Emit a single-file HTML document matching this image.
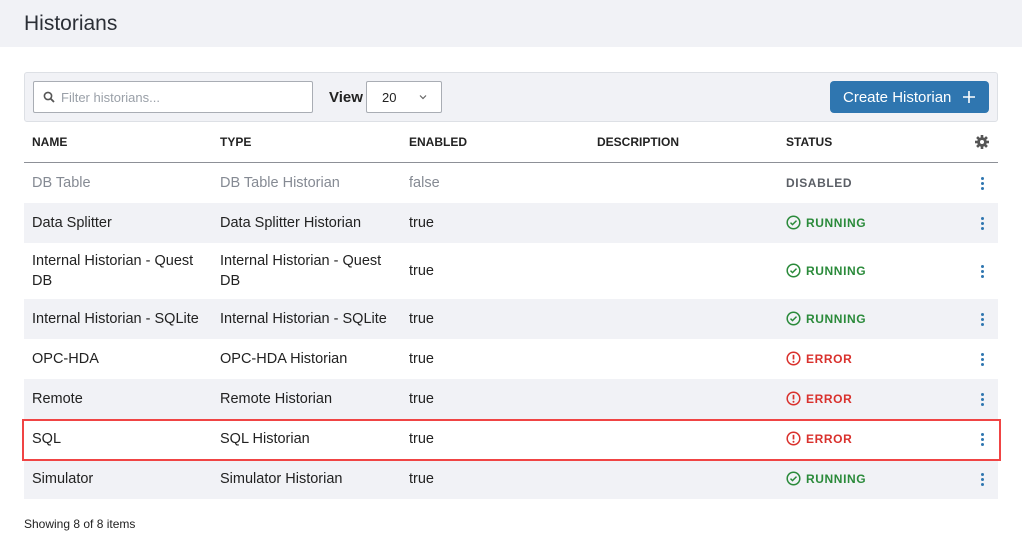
<!DOCTYPE html>
<html><head><style>
*{box-sizing:border-box;margin:0;padding:0}
body{width:1022px;height:535px;background:#fff;font-family:"Liberation Sans",sans-serif;color:#222;position:relative;overflow:hidden}
.hdr{position:absolute;left:0;top:0;width:1022px;height:47px;background:#f1f2f6}
.hdr h1{position:absolute;left:24px;top:12px;font-size:21px;font-weight:normal;color:#2b2f36}
.tb{position:absolute;left:24px;top:72px;width:974px;height:50px;background:#f1f2f6;border:1px solid #dde0e5;border-radius:3px}
.inp{position:absolute;left:8px;top:8px;width:280px;height:32px;background:#fff;border:1px solid #a9adb4;border-radius:2px;font-size:13px;color:#9aa0a8;padding:8px 0 0 27px}
.view{position:absolute;left:304px;top:16px;font-size:15px;font-weight:bold;color:#222}
.sel{position:absolute;left:341px;top:8px;width:76px;height:32px;background:#fff;border:1px solid #a9adb4;border-radius:2px;font-size:13px;padding:8px 0 0 15px}
.btn{position:absolute;left:805px;top:8px;width:159px;height:32px;background:#2f76b0;border-radius:4px;color:#fff;font-size:15px;padding:8px 0 0 13px}
.th{position:absolute;top:135px;font-size:12px;font-weight:bold;color:#222}
.line{position:absolute;left:24px;top:162px;width:974px;height:1px;background:#8d9097}
.row{position:absolute;left:24px;width:974px;font-size:14.5px;color:#222}
.row.g{background:#f1f2f6}
.row div{position:absolute}
.st{font-size:12px;font-weight:bold;letter-spacing:.6px}
.run{color:#2a8a3a}.err{color:#d9302c}
.keb{position:absolute;left:957px;width:3px}
.keb i{display:block;width:3px;height:3px;background:#2f76b0;border-radius:50%;margin-bottom:2px}
</style></head><body>
<div class="hdr"><h1>Historians</h1></div>
<div class="tb">
<div class="inp"><svg style="position:absolute;left:9px;top:9px" width="12" height="12" viewBox="0 0 12 12"><circle cx="5" cy="5" r="3.6" fill="none" stroke="#555" stroke-width="1.6"/><path d="M7.6 7.6L11 11" stroke="#555" stroke-width="1.8"/></svg>Filter historians...</div>
<div class="view">View</div>
<div class="sel">20<svg style="position:absolute;left:52px;top:12px" width="8" height="6" viewBox="0 0 8 6"><path d="M1 1.5l3 3 3-3" fill="none" stroke="#666" stroke-width="1.2"/></svg></div>
<div class="btn">Create Historian<svg style="position:absolute;left:133px;top:10px" width="12" height="12" viewBox="0 0 12 12"><path d="M6 0v12M0 6h12" stroke="#fff" stroke-width="1.6"/></svg></div>
</div>
<div class="th" style="left:32px">NAME</div>
<div class="th" style="left:220px">TYPE</div>
<div class="th" style="left:409px">ENABLED</div>
<div class="th" style="left:597px">DESCRIPTION</div>
<div class="th" style="left:786px">STATUS</div>
<svg style="position:absolute;left:975px;top:135px" width="14" height="14" viewBox="0 0 14 14"><g fill="#555"><circle cx="7" cy="7" r="4.8"/><rect x="5.7" y="0" width="2.6" height="14"/><rect x="0" y="5.7" width="14" height="2.6"/><rect x="5.7" y="0" width="2.6" height="14" transform="rotate(45 7 7)"/><rect x="5.7" y="0" width="2.6" height="14" transform="rotate(-45 7 7)"/></g><circle cx="7" cy="7" r="2" fill="#fff"/></svg>
<div class="line"></div>

<div class="row" style="top:163px;height:40px;color:#858a93"><div style="left:8px;top:12px">DB Table</div><div style="left:196px;top:12px">DB Table Historian</div><div style="left:385px;top:12px">false</div><div class="st" style="left:762px;top:13px;color:#5b5f66">DISABLED</div><div class="keb" style="top:14px"><i></i><i></i><i></i></div></div>

<div class="row g" style="top:203px;height:40px"><div style="left:8px;top:12px">Data Splitter</div><div style="left:196px;top:12px">Data Splitter Historian</div><div style="left:385px;top:12px">true</div><div class="st run" style="left:762px;top:12px"><svg style="vertical-align:-3px;margin-right:5px" width="15" height="15" viewBox="0 0 15 15"><circle cx="7.5" cy="7.5" r="6.3" fill="none" stroke="#2a8a3a" stroke-width="1.5"/><path d="M4.5 7.6l2 2 4-4" fill="none" stroke="#2a8a3a" stroke-width="1.5"/></svg>RUNNING</div><div class="keb" style="top:14px"><i></i><i></i><i></i></div></div>

<div class="row" style="top:243px;height:56px"><div style="left:8px;top:8px;line-height:20px">Internal Historian - Quest<br>DB</div><div style="left:196px;top:8px;line-height:20px">Internal Historian - Quest<br>DB</div><div style="left:385px;top:20px">true</div><div class="st run" style="left:762px;top:20px"><svg style="vertical-align:-3px;margin-right:5px" width="15" height="15" viewBox="0 0 15 15"><circle cx="7.5" cy="7.5" r="6.3" fill="none" stroke="#2a8a3a" stroke-width="1.5"/><path d="M4.5 7.6l2 2 4-4" fill="none" stroke="#2a8a3a" stroke-width="1.5"/></svg>RUNNING</div><div class="keb" style="top:22px"><i></i><i></i><i></i></div></div>

<div class="row g" style="top:299px;height:40px"><div style="left:8px;top:12px">Internal Historian - SQLite</div><div style="left:196px;top:12px">Internal Historian - SQLite</div><div style="left:385px;top:12px">true</div><div class="st run" style="left:762px;top:12px"><svg style="vertical-align:-3px;margin-right:5px" width="15" height="15" viewBox="0 0 15 15"><circle cx="7.5" cy="7.5" r="6.3" fill="none" stroke="#2a8a3a" stroke-width="1.5"/><path d="M4.5 7.6l2 2 4-4" fill="none" stroke="#2a8a3a" stroke-width="1.5"/></svg>RUNNING</div><div class="keb" style="top:14px"><i></i><i></i><i></i></div></div>

<div class="row" style="top:339px;height:40px"><div style="left:8px;top:12px">OPC-HDA</div><div style="left:196px;top:12px">OPC-HDA Historian</div><div style="left:385px;top:12px">true</div><div class="st err" style="left:762px;top:12px"><svg style="vertical-align:-3px;margin-right:5px" width="15" height="15" viewBox="0 0 15 15"><circle cx="7.5" cy="7.5" r="6.3" fill="none" stroke="#d9302c" stroke-width="1.5"/><path d="M7.5 3.8v4.6" stroke="#d9302c" stroke-width="1.7"/><circle cx="7.5" cy="10.8" r="1" fill="#d9302c"/></svg>ERROR</div><div class="keb" style="top:14px"><i></i><i></i><i></i></div></div>

<div class="row g" style="top:379px;height:40px"><div style="left:8px;top:12px">Remote</div><div style="left:196px;top:12px">Remote Historian</div><div style="left:385px;top:12px">true</div><div class="st err" style="left:762px;top:12px"><svg style="vertical-align:-3px;margin-right:5px" width="15" height="15" viewBox="0 0 15 15"><circle cx="7.5" cy="7.5" r="6.3" fill="none" stroke="#d9302c" stroke-width="1.5"/><path d="M7.5 3.8v4.6" stroke="#d9302c" stroke-width="1.7"/><circle cx="7.5" cy="10.8" r="1" fill="#d9302c"/></svg>ERROR</div><div class="keb" style="top:14px"><i></i><i></i><i></i></div></div>

<div class="row" style="top:419px;height:40px"><div style="left:8px;top:12px">SQL</div><div style="left:196px;top:12px">SQL Historian</div><div style="left:385px;top:12px">true</div><div class="st err" style="left:762px;top:12px"><svg style="vertical-align:-3px;margin-right:5px" width="15" height="15" viewBox="0 0 15 15"><circle cx="7.5" cy="7.5" r="6.3" fill="none" stroke="#d9302c" stroke-width="1.5"/><path d="M7.5 3.8v4.6" stroke="#d9302c" stroke-width="1.7"/><circle cx="7.5" cy="10.8" r="1" fill="#d9302c"/></svg>ERROR</div><div class="keb" style="top:14px"><i></i><i></i><i></i></div></div>

<div class="row g" style="top:459px;height:40px"><div style="left:8px;top:12px">Simulator</div><div style="left:196px;top:12px">Simulator Historian</div><div style="left:385px;top:12px">true</div><div class="st run" style="left:762px;top:12px"><svg style="vertical-align:-3px;margin-right:5px" width="15" height="15" viewBox="0 0 15 15"><circle cx="7.5" cy="7.5" r="6.3" fill="none" stroke="#2a8a3a" stroke-width="1.5"/><path d="M4.5 7.6l2 2 4-4" fill="none" stroke="#2a8a3a" stroke-width="1.5"/></svg>RUNNING</div><div class="keb" style="top:14px"><i></i><i></i><i></i></div></div>

<div style="position:absolute;left:22px;top:419px;width:979px;height:42px;border:2px solid #f04444"></div>
<div style="position:absolute;left:24px;top:517px;font-size:12px;color:#222">Showing 8 of 8 items</div>
</body></html>
